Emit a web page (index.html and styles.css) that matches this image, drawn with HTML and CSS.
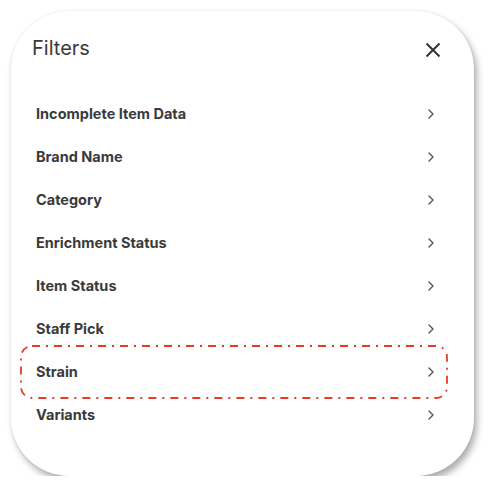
FILE: index.html
```html
<!DOCTYPE html>
<html lang="en">
<head>
<meta charset="utf-8">
<title>Filters</title>
<link rel="stylesheet" href="styles.css">
</head>
<body>
<div class="card">
  <div class="header">
    <h1 class="title">Filters</h1>
    <button class="close" aria-label="Close">
      <svg width="16" height="16" viewBox="0 0 16 16"><path d="M1.5 1.5 L14.5 14.5 M14.5 1.5 L1.5 14.5" stroke="#333" stroke-width="2" fill="none"/></svg>
    </button>
  </div>
  <ul class="list">
    <li class="row"><span>Incomplete Item Data</span><svg class="chev" width="6" height="10" viewBox="0 0 6 10"><path d="M1 1 L5 5 L1 9" /></svg></li>
    <li class="row"><span>Brand Name</span><svg class="chev" width="6" height="10" viewBox="0 0 6 10"><path d="M1 1 L5 5 L1 9" /></svg></li>
    <li class="row"><span>Category</span><svg class="chev" width="6" height="10" viewBox="0 0 6 10"><path d="M1 1 L5 5 L1 9" /></svg></li>
    <li class="row"><span>Enrichment Status</span><svg class="chev" width="6" height="10" viewBox="0 0 6 10"><path d="M1 1 L5 5 L1 9" /></svg></li>
    <li class="row"><span>Item Status</span><svg class="chev" width="6" height="10" viewBox="0 0 6 10"><path d="M1 1 L5 5 L1 9" /></svg></li>
    <li class="row"><span>Staff Pick</span><svg class="chev" width="6" height="10" viewBox="0 0 6 10"><path d="M1 1 L5 5 L1 9" /></svg></li>
    <li class="row highlighted"><span>Strain</span><svg class="chev" width="6" height="10" viewBox="0 0 6 10"><path d="M1 1 L5 5 L1 9" /></svg>
      <svg class="mark" width="428" height="54" viewBox="0 0 428 54"><rect x="1" y="1" width="426" height="52" rx="11" ry="11" /></svg>
    </li>
    <li class="row"><span>Variants</span><svg class="chev" width="6" height="10" viewBox="0 0 6 10"><path d="M1 1 L5 5 L1 9" /></svg></li>
  </ul>
</div>
</body>
</html>
```
FILE: styles.css
```css
html, body {
  margin: 0;
  padding: 0;
  background: #ffffff;
}
body {
  font-family: "Inter", "Liberation Sans", sans-serif;
  color: #3a3a3a;
}
.card {
  box-sizing: border-box;
  margin: 11px 0 0 11px;
  width: 463px;
  height: 465px;
  border-radius: 58px;
  background: #ffffff;
  box-shadow: 3px 5px 7px rgba(0, 0, 0, 0.32), 0 0 3px rgba(0, 0, 0, 0.08);
  padding-top: 25px;
}
.header {
  display: flex;
  justify-content: space-between;
  align-items: center;
  padding: 0 33px 0 21px;
  height: 24px;
}
.title {
  margin: 0;
  font-size: 20px;
  line-height: 24px;
  font-weight: 400;
  color: #3a3a3a;
}
.close {
  border: 0;
  background: none;
  padding: 0;
  width: 16px;
  height: 16px;
  display: block;
  margin-top: 3px;
}
.close svg { display: block; }
.list {
  list-style: none;
  margin: 32px 0 0 0;
  padding: 0;
}
.row {
  position: relative;
  display: flex;
  justify-content: space-between;
  align-items: center;
  height: 43px;
  padding: 0 40px 0 25px;
  font-size: 14.5px;
  font-weight: 700;
  color: #3a3a3a;
}
.chev {
  display: block;
  fill: none;
  stroke: #555555;
  stroke-width: 1.4;
  stroke-linecap: round;
  stroke-linejoin: round;
}
.mark {
  position: absolute;
  left: 9px;
  top: -5px;
  fill: none;
  stroke: #e53b27;
  stroke-width: 1.8;
  stroke-dasharray: 8 6 2 6;
}
```
